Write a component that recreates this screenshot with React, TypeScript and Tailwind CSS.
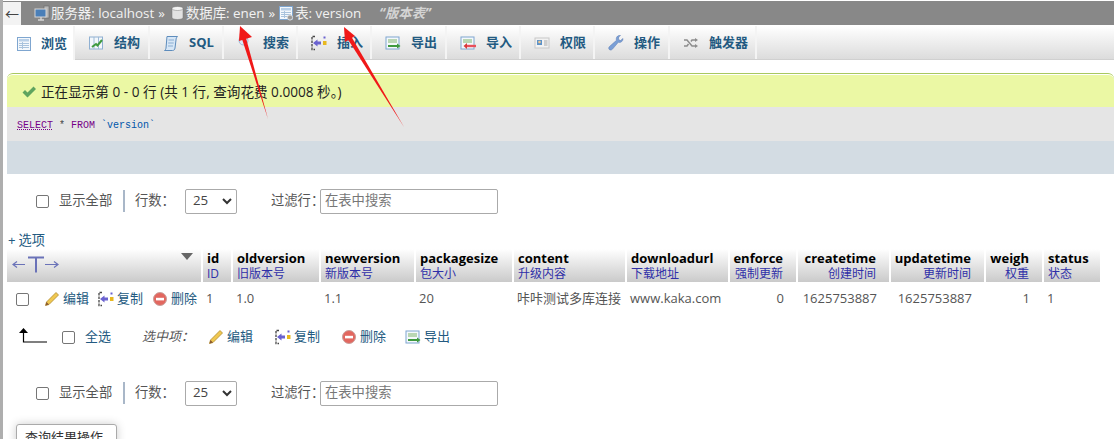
import React from 'react'

const font = { fontFamily: '"Open Sans", "Noto Sans CJK SC", sans-serif' }

function TableIcon({ gear = false }: { gear?: boolean }) {
  return (
    <svg width="16" height="16" viewBox="0 0 16 16">
      <rect x="1.5" y="1.5" width="13" height="13" fill="#f4f8fc" stroke="#7fa6d0" />
      <rect x="3" y="3" width="10" height="2.500" fill="#b9d0e8" />
      <path d="M3 7.500h10M3 9.500h10M3 11.500h10M6.500 6v7" stroke="#a9c3dd" strokeWidth="1" />
      {gear && <circle cx="12" cy="12.500" r="2.600" fill="#9a9a9a" stroke="#ddd" />}
    </svg>
  )
}

function ServerIcon() {
  return (
    <svg width="16" height="16" viewBox="0 0 16 16">
      <rect x="10" y="1" width="5" height="12" fill="#b8b8b8" stroke="#666" strokeWidth=".6" />
      <rect x="1" y="4" width="11" height="8" fill="#4a7fb8" stroke="#d5d5d5" />
      <path d="M4 15h6M7 12v3" stroke="#d5d5d5" strokeWidth="1.400" />
    </svg>
  )
}

function DbIcon() {
  return (
    <svg width="13" height="14" viewBox="0 0 13 14">
      <path d="M1 2.500v9c0 1.200 2.400 2 5.500 2s5.500-.8 5.500-2v-9z" fill="#e2e2e2" stroke="#777" strokeWidth=".5" />
      <ellipse cx="6.500" cy="2.500" rx="5.500" ry="2" fill="#f5f5f5" stroke="#777" strokeWidth=".5" />
    </svg>
  )
}

function StructureIcon() {
  return (
    <svg width="16" height="16" viewBox="0 0 16 16">
      <rect x="1.500" y="2" width="13" height="12" fill="#f3f7fb" stroke="#8fb0d2" />
      <path d="M6 2v12M10.500 2v12" stroke="#9dbad6" />
      <path d="M4 12l4-3 1.500 1.500L14 5" fill="none" stroke="#3f9a3f" strokeWidth="2" />
    </svg>
  )
}

function SqlIcon() {
  return (
    <svg width="16" height="17" viewBox="0 0 16 17">
      <path d="M4 1.500h10.500c-1 1-1.500 2-1.500 3.500l-1 8c-.2 1.600-1 2.500-2.500 2.500H1.500c1-.6 1.300-1.400 1.500-2.500l.7-8C3.800 3.500 3.800 2.500 4 1.500z" fill="#d6e6f6" stroke="#5d8cbc" />
      <path d="M5.500 5h5.500M5.200 8h5.500M5 11h5" stroke="#8aaed2" />
    </svg>
  )
}

function InsertIcon() {
  return (
    <svg width="16" height="16" viewBox="0 0 16 16">
      <path d="M4 1.500H1v13h3" fill="none" stroke="#444" strokeWidth="1.300" strokeDasharray="2.500 1" />
      <path d="M2 8l4.500-3.500V6.500H10v3H6.500v2z" fill="#6a62d0" />
      <rect x="12" y="6" width="3.500" height="4" fill="#e8b820" />
      <rect x="12.500" y="1.500" width="2" height="2" fill="#6a62d0" />
    </svg>
  )
}

function ExportIcon() {
  return (
    <svg width="16" height="16" viewBox="0 0 16 16">
      <rect x="1" y="2" width="13" height="12" fill="#f4f8fc" stroke="#7fa6d0" />
      <path d="M3 5h9M3 7h9" stroke="#7fb56a" />
      <path d="M3 11h9" stroke="#3f9a3f" strokeWidth="2" />
      <path d="M12 8.500l3.500 2.500-3.500 2.500z" fill="#3f9a3f" />
    </svg>
  )
}

function ImportIcon() {
  return (
    <svg width="16" height="16" viewBox="0 0 16 16">
      <rect x="1" y="2" width="13" height="12" fill="#f4f8fc" stroke="#7fa6d0" />
      <path d="M3 5h9M3 7h9" stroke="#7fb56a" />
      <path d="M7 11h9" stroke="#e8505b" strokeWidth="2.400" />
      <path d="M7 8l-3.500 3 3.500 3z" fill="#d83a3a" />
    </svg>
  )
}

function RightsIcon() {
  return (
    <svg width="16" height="16" viewBox="0 0 16 16">
      <rect x="1" y="3" width="14" height="10" fill="#f2f2f2" stroke="#c8c8c8" />
      <rect x="3" y="5" width="5" height="5" fill="#5d92c8" />
      <circle cx="5.500" cy="7" r="1.300" fill="#f0c890" />
      <path d="M10 6h3.500M10 8h3.500M10 10h3.500" stroke="#aaa" />
    </svg>
  )
}

function WrenchIcon() {
  return (
    <svg width="16" height="16" viewBox="0 0 16 16">
      <path d="M15 3.500l-2.500 2-2-1 .2-2.500L12.500.500c-2-.5-4 .8-4.200 3-.1.700 0 1.300.2 1.800L1.500 11.500c-1 1-1 2.200-.2 3s2.100.700 3-.2l6-7c2.300.7 5-1 4.700-3.800z" fill="#7a9fd6" stroke="#5577b0" strokeWidth=".5" />
    </svg>
  )
}

function TriggerIcon() {
  return (
    <svg width="16" height="16" viewBox="0 0 16 16" fill="none" stroke="#8c8c8c" strokeWidth="1.500">
      <path d="M1 5h3l5 6h3M1 11h3l1.500-2M8 6.500L9 5h3" />
      <path d="M12 3l3 2-3 2zM12 9l3 2-3 2z" fill="#8c8c8c" stroke="none" />
    </svg>
  )
}

function SearchIcon() {
  return (
    <svg width="16" height="16" viewBox="0 0 16 16">
      <circle cx="6.500" cy="5.500" r="4.500" fill="#dbe9f6" stroke="#9bb8d6" />
    </svg>
  )
}

function PencilIcon() {
  return (
    <svg width="16" height="16" viewBox="0 0 16 16">
      <path d="M12 1.500l2.500 2.500L5 13.500 1.500 14.500 2.500 11z" fill="#f0c850" stroke="#b08a30" strokeWidth=".8" />
      <path d="M2.500 11L5 13.500 1.500 14.500z" fill="#8a5a30" />
    </svg>
  )
}

function DeleteIcon() {
  return (
    <svg width="16" height="16" viewBox="0 0 16 16">
      <circle cx="8" cy="8" r="6.500" fill="#e2675f" stroke="#c9a09c" />
      <rect x="4" y="6.800" width="8" height="2.600" fill="#fff" />
    </svg>
  )
}

function CheckIcon() {
  return (
    <svg width="16" height="16" viewBox="0 0 16 16">
      <path d="M1.500 8.500l2.500-2.500 2.500 2.500L12.500 2.500l2.500 2.500-8.500 8.500z" fill="#5fa45f" />
    </svg>
  )
}

function ColumnDropIcon() {
  return (
    <svg width="47" height="18" viewBox="0 0 47 18" fill="none" stroke="#6a72b8">
      <path d="M1 9.500h12M5 6.500l-4 3 4 3" strokeWidth="1.200" />
      <path d="M33 9.500h13M42 6.500l4 3-4 3" strokeWidth="1.200" />
      <path d="M16 2.500h16M24 2.500v15" strokeWidth="2" />
    </svg>
  )
}

const tabs = [
  { label: '浏览', icon: <TableIcon />, w: 'w-[72px]', gap: 'gap-[9px]', active: true },
  { label: '结构', icon: <StructureIcon />, w: 'w-[75px]', gap: 'gap-[10px]' },
  { label: 'SQL', icon: <SqlIcon />, w: 'w-[74px]', gap: 'gap-[10px]' },
  { label: '搜索', icon: <SearchIcon />, w: 'w-[74px]', gap: 'gap-[10px]' },
  { label: '插入', icon: <InsertIcon />, w: 'w-[74px]', gap: 'gap-[10px]' },
  { label: '导出', icon: <ExportIcon />, w: 'w-[75px]', gap: 'gap-[10px]' },
  { label: '导入', icon: <ImportIcon />, w: 'w-[74px]', gap: 'gap-[10px]' },
  { label: '权限', icon: <RightsIcon />, w: 'w-[74px]', gap: 'gap-[10px]' },
  { label: '操作', icon: <WrenchIcon />, w: 'w-[75px]', gap: 'gap-[10px]' },
  { label: '触发器', icon: <TriggerIcon />, w: 'w-[87px]', gap: 'gap-[10px]' },
]

const cols = [
  { name: 'id', sub: 'ID', w: 'w-[30px]', value: '1', right: false },
  { name: 'oldversion', sub: '旧版本号', w: 'w-[88px]', value: '1.0', right: false },
  { name: 'newversion', sub: '新版本号', w: 'w-[95px]', value: '1.1', right: false },
  { name: 'packagesize', sub: '包大小', w: 'w-[98px]', value: '20', right: false },
  { name: 'content', sub: '升级内容', w: 'w-[113px]', value: '咔咔测试多库连接', right: false },
  { name: 'downloadurl', sub: '下载地址', w: 'w-[103px]', value: 'www.kaka.com', right: false },
  { name: 'enforce', sub: '强制更新', w: 'w-[68px]', value: '0', right: true },
  { name: 'createtime', sub: '创建时间', w: 'w-[93px]', value: '1625753887', right: true },
  { name: 'updatetime', sub: '更新时间', w: 'w-[95px]', value: '1625753887', right: true },
  { name: 'weigh', sub: '权重', w: 'w-[58px]', value: '1', right: true },
  { name: 'status', sub: '状态', w: 'w-[58px]', value: '1', right: false },
]

function Controls() {
  return (
    <div className="flex items-center h-[26px] pl-[33px] text-[13.3px] text-[#555]">
      <input type="checkbox" readOnly className="appearance-none w-[13px] h-[13px] rounded-[2px] border border-[#767676] bg-white" />
      <span className="ml-[10px] w-[54px] whitespace-nowrap">显示全部</span>
      <span className="ml-[10px] h-[22px] w-[2px] bg-[#a9b7c8]" />
      <span className="ml-[10px] w-[50px] whitespace-nowrap">行数：</span>
      <div className="flex items-center justify-between w-[52px] h-[25px] pl-[7px] pr-[3px] border border-[#aaa] rounded-[2px] bg-white text-[#444]">
        25
        <svg width="12" height="12" viewBox="0 0 12 12"><path d="M2 4l4 4 4-4" fill="none" stroke="#333" strokeWidth="2" /></svg>
      </div>
      <span className="ml-[34px] w-[49px] whitespace-nowrap">过滤行：</span>
      <div className="flex items-center w-[178px] h-[25px] pl-[4px] border border-[#aaa] rounded-[2px] bg-white text-[#777]">在表中搜索</div>
    </div>
  )
}

function Action({ icon, label, className = '' }: { icon: React.ReactNode; label: string; className?: string }) {
  return (
    <span className={`flex items-center gap-[3px] text-[#235a81] whitespace-nowrap ${className}`}>
      {icon}
      {label}
    </span>
  )
}

export default function App() {
  return (
    <div className="relative h-[439px] w-[1114px] overflow-hidden bg-white border-l-[3px] border-[#aeaeae]" style={font}>
      {/* top bar */}
      <div className="mt-px flex items-center h-[24px] bg-[#888] text-[13.4px] text-[#f2f2f2]">
        <div className="flex items-center justify-center w-[18px] h-[23px] bg-[#f3f3f3] text-[#444] text-[14px]">←</div>
        <div className="flex items-center ml-[13px] pt-px whitespace-nowrap">
          <ServerIcon />
          <span className="ml-px">服务器: localhost</span>
          <span className="ml-[4px]">»</span>
          <span className="ml-[6px]"><DbIcon /></span>
          <span className="ml-[2px]">数据库: enen</span>
          <span className="ml-[4px]">»</span>
          <span className="ml-[3px]"><TableIcon gear /></span>
          <span className="ml-px">表: version</span>
          <span className="ml-[18px] italic font-bold text-[#d4d4d4] text-[13.3px]">“版本表”</span>
        </div>
      </div>

      {/* tabs */}
      <div className="mt-px flex h-[34px] bg-gradient-to-b from-white to-[#dcdcdc] border-b border-[#d0d0d0]">
        {tabs.map(t => (
          <div
            key={t.label}
            className={`${t.w} ${t.gap} flex items-center pl-[13px] pt-px text-[13px] font-bold text-[#235a81] whitespace-nowrap border-r-2 border-[#f4f4f4] ${t.active ? 'bg-white h-[34px] border-[#d8d8d8] border-r' : ''}`}
          >
            {t.icon}
            {t.label}
          </div>
        ))}
      </div>

      {/* message */}
      <div className="mt-[13px] ml-[4px] rounded-t-[6px] border-t border-[#a8c860] bg-[#ebf8a4] h-[34px] flex items-center pl-[14px] pt-[3px] gap-[4px] text-[13.6px] text-[#222] shadow-[inset_0_1px_0_#fff]">
        <CheckIcon />
        正在显示第 0 - 0 行 (共 1 行, 查询花费 0.0008 秒。)
      </div>
      <div className="ml-[4px] bg-[#e5e5e5] h-[34px] flex items-center pl-[10px] pt-[2px] font-['Liberation_Mono',monospace] text-[10px]">
        <span className="text-[#770088] underline decoration-dotted">SELECT</span>
        <span className="text-[#444]">&nbsp;*&nbsp;</span>
        <span className="text-[#770088]">FROM</span>
        <span className="text-[#444]">&nbsp;</span>
        <span className="text-[#0055aa]">`version`</span>
      </div>
      <div className="ml-[4px] bg-[#d3dce3] h-[33px]" />

      <div className="mt-[14px]">
        <Controls />
      </div>

      <div className="mt-[18px] ml-[5px] h-[17px] flex items-center gap-[3px] text-[13.2px] text-[#235a81]">
        <span>+</span>
        <span>选项</span>
      </div>

      {/* result table */}
      <table className="ml-[4px] table-fixed border-collapse w-[1094px]">
        <colgroup>
          <col className="w-[195px]" />
          {cols.map(c => <col key={c.name} className={c.w} />)}
        </colgroup>
        <thead>
          <tr className="h-[33px]">
            <th className="relative bg-gradient-to-b from-white to-[#cacaca] border-r-2 border-white p-0">
              <span className="absolute left-[5px] top-[6px] flex">
                <ColumnDropIcon />
              </span>
              <span className="absolute right-[8px] top-[4px] w-0 h-0 border-x-[6px] border-x-transparent border-t-[7px] border-t-[#666]" />
            </th>
            {cols.map(c => (
              <th
                key={c.name}
                className={`bg-gradient-to-b from-white to-[#cacaca] border-r-2 border-white align-top pt-[1px] font-normal leading-[16px] ${c.right ? 'text-right pl-[2px] pr-[13px]' : 'text-left px-[4px]'} ${c.name === 'status' ? 'border-r-0' : ''}`}
              >
                <div className="font-bold text-[13px] text-black whitespace-nowrap">{c.name}</div>
                <div className="text-[12px] text-[#2f2fa8] whitespace-nowrap">{c.sub}</div>
              </th>
            ))}
          </tr>
        </thead>
        <tbody>
          <tr className="h-[30px] text-[13px] text-[#555]">
            <td className="p-0 pt-[4px]">
              <div className="flex items-center pl-[9px] text-[13px]">
                <input type="checkbox" readOnly className="appearance-none w-[13px] h-[13px] rounded-[2px] border border-[#767676] bg-white" />
                <Action icon={<PencilIcon />} label="编辑" className="ml-[15px]" />
                <Action icon={<InsertIcon />} label="复制" className="ml-[9px]" />
                <Action icon={<DeleteIcon />} label="删除" className="ml-[9px]" />
              </div>
            </td>
            {cols.map(c => (
              <td key={c.name} className={`pt-[4px] whitespace-nowrap ${c.right ? 'text-right pr-[13px]' : 'text-left px-[4px]'}`}>{c.value}</td>
            ))}
          </tr>
        </tbody>
      </table>

      {/* bulk actions */}
      <div className="mt-[10px] flex items-center h-[30px] pl-[16px] text-[13px] text-[#235a81]">
        <svg width="29" height="18" viewBox="0 0 29 18">
          <path d="M4.500 0l4.500 5H0z" fill="#000" />
          <path d="M4.500 4v10H28" fill="none" stroke="#000" strokeWidth="1.200" />
        </svg>
        <input type="checkbox" readOnly className="ml-[14px] appearance-none w-[13px] h-[13px] rounded-[2px] border border-[#767676] bg-white" />
        <span className="ml-[10px]">全选</span>
        <span className="ml-[31px] italic text-[#555]">选中项：</span>
        <Action icon={<PencilIcon />} label="编辑" className="ml-[14px]" />
        <Action icon={<InsertIcon />} label="复制" className="ml-[22px]" />
        <Action icon={<DeleteIcon />} label="删除" className="ml-[21px]" />
        <Action icon={<ExportIcon />} label="导出" className="ml-[19px]" />
      </div>

      <div className="mt-[28px]">
        <Controls />
      </div>

      <div className="mt-[18px] ml-[13px] w-[101px] h-[30px] px-[8px] pt-[3px] rounded-t-[3px] border border-[#aaa] bg-white text-[13px] text-[#333] shadow-[0_0_10px_rgba(0,0,0,0.2)] whitespace-nowrap">
        查询结果操作
      </div>

      {/* red annotation arrows */}
      <svg className="absolute left-[-3px] top-0 pointer-events-none" width="1114" height="439" viewBox="0 0 1114 439">
        <path d="M268 119L246 38l-4 1z" fill="#f01818" />
        <path d="M240 26l12 11-13 4z" fill="#f01818" />
        <path d="M404 127L351 36l-4 2z" fill="#f01818" />
        <path d="M344 27l11 9-10 6z" fill="#f01818" />
      </svg>
    </div>
  )
}
